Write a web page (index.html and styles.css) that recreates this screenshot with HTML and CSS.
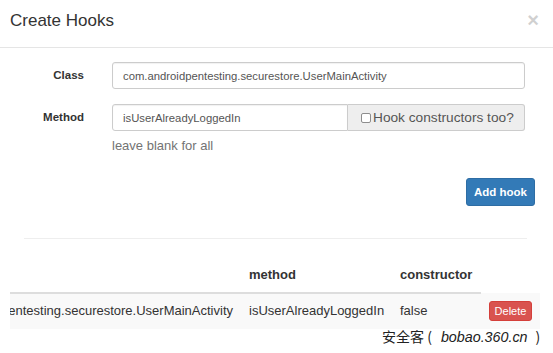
FILE: index.html
```html
<!DOCTYPE html>
<html>
<head>
<meta charset="utf-8">
<link rel="stylesheet" href="styles.css">
</head>
<body>
<div class="modal">
  <div class="modal-header">
    <h4 class="modal-title">Create Hooks</h4>
    <span class="close">&times;</span>
  </div>
  <div class="modal-body">
    <div class="form-row">
      <label class="label">Class</label>
      <input class="input" type="text" value="com.androidpentesting.securestore.UserMainActivity">
    </div>
    <div class="form-row method-row">
      <label class="label">Method</label>
      <div class="control">
        <div class="input-group">
          <input class="input grouped" type="text" value="isUserAlreadyLoggedIn">
          <span class="addon"><span class="checkbox"></span>Hook constructors too?</span>
        </div>
        <div class="help">leave blank for all</div>
      </div>
    </div>
    <div class="actions">
      <button class="btn-primary">Add hook</button>
    </div>
    <hr class="divider">
  </div>
  <div class="table-wrap">
    <table class="table">
      <colgroup>
        <col class="c1"><col class="c2"><col class="c3"><col class="c4">
      </colgroup>
      <thead>
        <tr><th></th><th>method</th><th>constructor</th></tr>
      </thead>
      <tbody>
        <tr>
          <td class="clip"><span>com.androidpentesting.securestore.UserMainActivity</span></td>
          <td>isUserAlreadyLoggedIn</td>
          <td>false</td>
          <td><button class="btn-danger">Delete</button></td>
        </tr>
      </tbody>
    </table>
  </div>
  <div class="watermark">安全客 (<span class="wm-latin">bobao.360.cn</span>)</div>
</div>
</body>
</html>
```

FILE: styles.css
```css
html, body {
  margin: 0;
  padding: 0;
  background: #fff;
}
body {
  font-family: "Liberation Sans", Arial, "Noto Sans CJK SC", sans-serif;
  color: #333;
  width: 553px;
  height: 353px;
  overflow: hidden;
}
.modal {
  position: relative;
  height: 353px;
}
.modal-header {
  display: flex;
  justify-content: space-between;
  align-items: flex-start;
  padding: 11px 14px 16px 10px;
  border-bottom: 1px solid #e5e5e5;
}
.modal-title {
  margin: 0;
  font-size: 17px;
  line-height: 20px;
  font-weight: normal;
  color: #333;
}
.close {
  font-size: 20px;
  line-height: 17px;
  font-weight: bold;
  color: #000;
  opacity: 0.18;
  margin-top: 1px;
}
.modal-body {
  padding: 14px 18px 0 0;
}
.form-row {
  display: grid;
  grid-template-columns: 84px 413px;
  column-gap: 28px;
  align-items: start;
}
.method-row {
  margin-top: 15px;
}
.label {
  text-align: right;
  font-weight: bold;
  font-size: 11.5px;
  line-height: 27px;
  color: #333;
}
.input {
  box-sizing: border-box;
  height: 27px;
  width: 100%;
  border: 1px solid #ccc;
  border-radius: 3px;
  padding: 0 10px;
  font-family: "Liberation Sans", Arial, sans-serif;
  font-size: 11.3px;
  color: #555;
  box-shadow: inset 0 1px 1px rgba(0,0,0,0.06);
  outline: none;
}
.input-group {
  display: flex;
  height: 27px;
}
.input.grouped {
  width: 236px;
  flex: none;
  border-radius: 3px 0 0 3px;
}
.addon {
  flex: 1;
  box-sizing: border-box;
  display: flex;
  align-items: center;
  padding-left: 13px;
  background: #eee;
  border: 1px solid #ccc;
  border-left: 0;
  border-radius: 0 3px 3px 0;
  font-size: 13.7px;
  color: #555;
}
.checkbox {
  box-sizing: border-box;
  width: 10px;
  height: 10px;
  border: 1px solid #8d8d8d;
  border-radius: 2px;
  background: #fff;
  margin-right: 2px;
}
.help {
  margin-top: 6px;
  font-size: 13px;
  line-height: 18px;
  color: #737373;
}
.actions {
  display: flex;
  justify-content: flex-end;
  margin-top: 23px;
}
.btn-primary {
  box-sizing: border-box;
  width: 69px;
  height: 28px;
  background: #337ab7;
  border: 1px solid #2e6da4;
  border-radius: 3px;
  color: #fff;
  font-family: "Liberation Sans", Arial, sans-serif;
  font-weight: bold;
  font-size: 11.5px;
  padding: 0;
}
.divider {
  margin: 32px 8px 0 24px;
  border: 0;
  border-top: 1px solid #eee;
}
.table-wrap {
  padding: 18px 13px 0 10px;
}
.table {
  width: 530px;
  table-layout: fixed;
  border-collapse: collapse;
  font-size: 13px;
}
.c1 { width: 231px; }
.c2 { width: 151px; }
.c3 { width: 89px; }
.c4 { width: 59px; }
.table th {
  text-align: left;
  font-weight: bold;
  padding: 9px 8px 8px;
  line-height: 18px;
  border-bottom: 2px solid #ddd;
  color: #333;
}
.table td {
  padding: 7px 8px 8px;
  line-height: 20px;
  background: #f9f9f9;
  white-space: nowrap;
  color: #333;
}
.table td.clip {
  overflow: hidden;
  direction: rtl;
  text-align: left;
}
.btn-danger {
  box-sizing: border-box;
  width: 43px;
  height: 20px;
  padding: 0;
  background: #d9534f;
  border: 1px solid #d43f3a;
  border-radius: 3px;
  color: #fff;
  font-family: "Liberation Sans", Arial, sans-serif;
  font-size: 11px;
  vertical-align: middle;
}
.watermark {
  position: absolute;
  left: 382px;
  top: 327px;
  font-family: "Noto Sans CJK SC", "Liberation Sans", sans-serif;
  font-size: 14px;
  color: #222;
  line-height: 18px;
  white-space: pre;
}
.wm-latin {
  font-family: "Liberation Sans", sans-serif;
  font-style: italic;
  font-size: 14.3px;
  margin: 0 8px 0 9px;
}
```
